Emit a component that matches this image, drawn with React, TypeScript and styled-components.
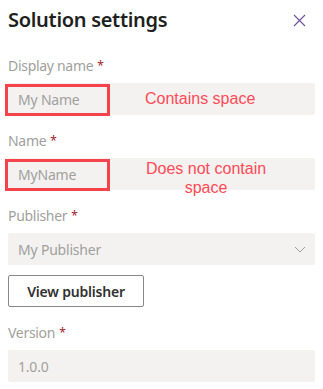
import styled, { createGlobalStyle } from "styled-components";

const GlobalStyle = createGlobalStyle`
  html, body {
    margin: 0;
    padding: 0;
    background: #ffffff;
  }
  body {
    font-family: "Noto Sans", "Open Sans", sans-serif;
  }
`;

const Panel = styled.div`
  width: 323px;
  height: 389px;
  padding: 0 8px;
  box-sizing: border-box;
  overflow: hidden;
  background: #ffffff;
`;

const Header = styled.div`
  display: flex;
  align-items: center;
  justify-content: space-between;
  height: 40px;
  margin-bottom: 16px;
`;

const Title = styled.h1`
  margin: 0;
  font-size: 20px;
  line-height: 28px;
  font-weight: 600;
  color: #201f1e;
  letter-spacing: -0.3px;
`;

const CloseButton = styled.button`
  display: flex;
  align-items: center;
  justify-content: center;
  width: 32px;
  height: 32px;
  margin-right: 0;
  padding: 0;
  border: none;
  background: transparent;
  cursor: pointer;
`;

const Field = styled.div<{ $gapAfter?: number }>`
  display: flex;
  flex-direction: column;
  gap: 7px;
  margin-bottom: ${(p) => p.$gapAfter ?? 16}px;
`;

const Label = styled.label`
  font-size: 14px;
  line-height: 20px;
  color: #a19f9d;
  letter-spacing: -0.3px;

  & span {
    color: #a4262c;
    margin-left: 4px;
    font-size: 12px;
    vertical-align: 1px;
  }
`;

const InputWrap = styled.div`
  position: relative;
`;

const Input = styled.div`
  display: flex;
  align-items: center;
  justify-content: space-between;
  height: 32px;
  padding: 0 9px 0 10px;
  box-sizing: border-box;
  border-radius: 2px;
  background: #f3f2f1;
  font-size: 14px;
  color: #a19f9d;
  letter-spacing: -0.2px;
`;

const Highlight = styled.div`
  position: absolute;
  left: -3px;
  top: 1px;
  width: 105px;
  height: 32px;
  box-sizing: border-box;
  border: 3px solid #f5434b;
`;

const Note = styled.div<{ $top: number; $left: number }>`
  position: absolute;
  left: ${(p) => p.$left}px;
  top: ${(p) => p.$top}px;
  white-space: nowrap;
  font-family: "Liberation Sans", Arial, sans-serif;
  font-size: 16px;
  line-height: 19px;
  color: #ff4a55;
  text-align: center;
`;

const Button = styled.button`
  display: block;
  width: 136px;
  height: 32px;
  margin-bottom: 16px;
  padding: 0;
  border: 1px solid #8a8886;
  border-radius: 2px;
  background: #ffffff;
  font-family: "Noto Sans", "Open Sans", sans-serif;
  font-size: 14px;
  font-weight: 600;
  color: #323130;
  letter-spacing: -0.2px;
`;

const Chevron = () => (
  <svg width="12" height="7" viewBox="0 0 12 7" fill="none">
    <path d="M1 1l5 5 5-5" stroke="#a19f9d" strokeWidth="1" />
  </svg>
);

const App = () => {
  return (
    <>
      <GlobalStyle />
      <Panel>
        <Header>
          <Title>Solution settings</Title>
          <CloseButton aria-label="Close">
            <svg width="13" height="13" viewBox="0 0 13 13">
              <path d="M1 1l11 11M12 1L1 12" stroke="#6f4fa0" strokeWidth="1.1" />
            </svg>
          </CloseButton>
        </Header>

        <Field>
          <Label>
            Display name<span>*</span>
          </Label>
          <InputWrap>
            <Input>My Name</Input>
            <Highlight />
            <Note $top={6} $left={137}>
              Contains space
            </Note>
          </InputWrap>
        </Field>

        <Field>
          <Label>
            Name<span>*</span>
          </Label>
          <InputWrap>
            <Input>MyName</Input>
            <Highlight />
            <Note $top={1} $left={138}>
              Does not contain
              <br />
              space
            </Note>
          </InputWrap>
        </Field>

        <Field $gapAfter={10}>
          <Label>
            Publisher<span>*</span>
          </Label>
          <Input>
            My Publisher
            <Chevron />
          </Input>
        </Field>

        <Button>View publisher</Button>

        <Field>
          <Label>
            Version<span>*</span>
          </Label>
          <Input>1.0.0</Input>
        </Field>
      </Panel>
    </>
  );
};

export default App;
